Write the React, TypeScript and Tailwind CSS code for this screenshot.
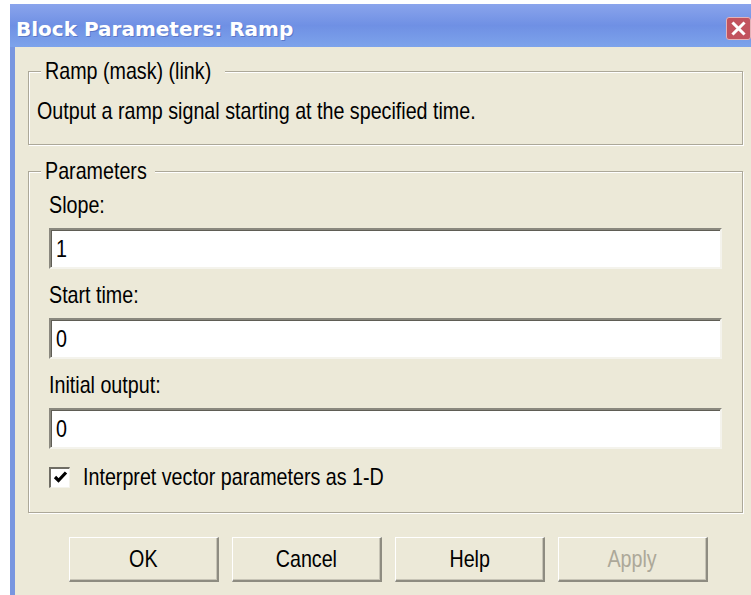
import React from "react";

const ui = { fontFamily: '"Liberation Sans", Arial, sans-serif' };

// Tahoma-like condensed label: Liberation Sans squeezed horizontally
function Txt({ children, center }: { children: React.ReactNode; center?: boolean }) {
  return (
    <span
      className={
        "block w-max h-6 whitespace-nowrap scale-x-82 text-[24px] leading-6 " + (center ? "origin-center" : "origin-left")
      }
    >
      {children}
    </span>
  );
}

function Field({ label, value }: { label: string; value: string }) {
  return (
    <div className="flex flex-col">
      <div className="text-black">
        <Txt>{label}</Txt>
      </div>
      <div className="mt-[11px] h-[41px] bg-white border-t-2 border-l-2 border-r-2 border-b-2 border-t-[#8a887e] border-l-[#8a887e] border-r-[#f4f3ec] border-b-[#f4f3ec] shadow-[inset_1px_1px_0_#5f5d55] flex items-center pl-[5px] text-black">
        <Txt>{value}</Txt>
      </div>
    </div>
  );
}

function Button({ children, disabled }: { children: string; disabled?: boolean }) {
  return (
    <button
      className={
        "w-[150px] h-[45px] flex items-center justify-center bg-[#ece9d8] border-t border-l border-t-white border-l-white border-r-2 border-b-2 border-r-[#8e8c81] border-b-[#8e8c81] shadow-[inset_-1px_-1px_0_#c7c4b6] " +
        (disabled ? "text-[#aca899]" : "text-black")
      }
    >
      <Txt center>{children}</Txt>
    </button>
  );
}

export default function App() {
  return (
    <div className="w-[751px] h-[595px] bg-white overflow-hidden pt-[4px] pl-[10px]" style={ui}>
      <div className="flex flex-col h-full">
        {/* title bar */}
        <div className="h-[43px] flex items-start bg-linear-to-b from-[#8aa4ec] via-[#6f90e4] to-[#7da3eb]">
          <span
            className="pt-[13px] pl-[6px] text-[20px] leading-6 font-bold text-white [text-shadow:1px_1px_0_#5a78c8]"
            style={{ fontFamily: '"DejaVu Sans", sans-serif' }}
          >
            Block Parameters: Ramp
          </span>
          <div className="ml-auto mt-[13px] w-[25px] h-[23px] rounded-[3px] bg-[#c2535e] border border-[#e3b3b8] flex items-center justify-center">
            <svg width="15" height="15" viewBox="0 0 15 15">
              <path d="M2.5 2.5 L12.5 12.5 M12.5 2.5 L2.5 12.5" stroke="white" strokeWidth="3" strokeLinecap="square" />
            </svg>
          </div>
        </div>

        {/* client area */}
        <div className="flex-1 bg-[#ece9d8] border-l-[5px] border-[#7896e0] pt-[12px] pl-[13px]">
          <fieldset className="w-[715px] border border-[#aca899] shadow-[1px_1px_0_#ffffff,inset_1px_1px_0_#ffffff]">
            <legend className="ml-[12px] pl-[4px] w-[184px] h-6 text-black bg-[#ece9d8]">
              <Txt>Ramp (mask) (link)</Txt>
            </legend>
            <div className="mt-[16px] pl-[8px] pb-[21px] text-black">
              <Txt>Output a ramp signal starting at the specified time.</Txt>
            </div>
          </fieldset>

          <fieldset className="mt-[14px] w-[715px] border border-[#aca899] shadow-[1px_1px_0_#ffffff,inset_1px_1px_0_#ffffff]">
            <legend className="ml-[12px] pl-[4px] w-[114px] h-6 text-black bg-[#ece9d8]">
              <Txt>Parameters</Txt>
            </legend>
            <div className="px-[20px] pb-[23px]">
              <div className="mt-[10px] flex flex-col gap-[14px]">
                <Field label="Slope:" value="1" />
                <Field label="Start time:" value="0" />
                <Field label="Initial output:" value="0" />
              </div>
              <div className="mt-[16px] flex items-center">
                <div className="w-[21px] h-[21px] bg-white border-t-2 border-l-2 border-r border-b border-t-[#6f6d64] border-l-[#6f6d64] border-r-[#f4f3ec] border-b-[#f4f3ec] flex items-center justify-center">
                  <svg width="15" height="15" viewBox="0 0 15 15">
                    <path d="M2 7 L5.5 10.5 L13 2.5" stroke="black" strokeWidth="3.2" fill="none" />
                  </svg>
                </div>
                <span className="ml-[13px] text-black">
                  <Txt>Interpret vector parameters as 1-D</Txt>
                </span>
              </div>
            </div>
          </fieldset>

          <div className="mt-[24px] ml-[41px] flex gap-[13px]">
            <Button>OK</Button>
            <Button>Cancel</Button>
            <Button>Help</Button>
            <Button disabled>Apply</Button>
          </div>
        </div>
      </div>
    </div>
  );
}
